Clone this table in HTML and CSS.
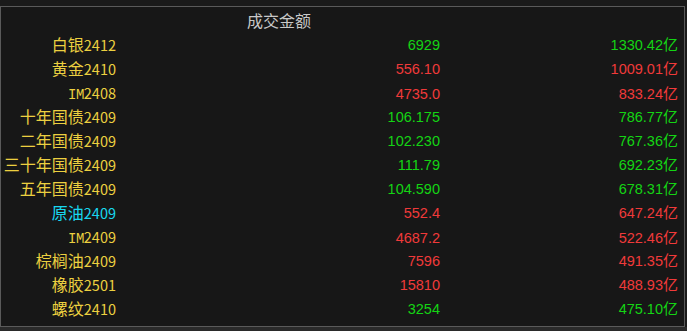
FILE: index.html
```html
<!DOCTYPE html>
<html>
<head>
<meta charset="utf-8">
<link rel="stylesheet" href="styles.css">
</head>
<body>
<div class="panel">
  <div class="table">
    <div class="row head">
      <div class="c1"></div>
      <div class="c2 htext">成交金额</div>
      <div class="c3"></div>
    </div>
    <div class="row"><div class="c1 name">白银<span class="d">2412</span></div><div class="c2 up">6929</div><div class="c3 up">1330.42<span class="yi">亿</span></div></div>
    <div class="row"><div class="c1 name">黄金<span class="d">2410</span></div><div class="c2 dn">556.10</div><div class="c3 dn">1009.01<span class="yi">亿</span></div></div>
    <div class="row"><div class="c1 name"><span class="m">IM</span><span class="d">2408</span></div><div class="c2 dn">4735.0</div><div class="c3 dn">833.24<span class="yi">亿</span></div></div>
    <div class="row"><div class="c1 name">十年国债<span class="d">2409</span></div><div class="c2 up">106.175</div><div class="c3 up">786.77<span class="yi">亿</span></div></div>
    <div class="row"><div class="c1 name">二年国债<span class="d">2409</span></div><div class="c2 up">102.230</div><div class="c3 up">767.36<span class="yi">亿</span></div></div>
    <div class="row"><div class="c1 name">三十年国债<span class="d">2409</span></div><div class="c2 up">111.79</div><div class="c3 up">692.23<span class="yi">亿</span></div></div>
    <div class="row"><div class="c1 name">五年国债<span class="d">2409</span></div><div class="c2 up">104.590</div><div class="c3 up">678.31<span class="yi">亿</span></div></div>
    <div class="row"><div class="c1 name cyan">原油<span class="d">2409</span></div><div class="c2 dn">552.4</div><div class="c3 dn">647.24<span class="yi">亿</span></div></div>
    <div class="row"><div class="c1 name"><span class="m">IM</span><span class="d">2409</span></div><div class="c2 dn">4687.2</div><div class="c3 dn">522.46<span class="yi">亿</span></div></div>
    <div class="row"><div class="c1 name">棕榈油<span class="d">2409</span></div><div class="c2 dn">7596</div><div class="c3 dn">491.35<span class="yi">亿</span></div></div>
    <div class="row"><div class="c1 name">橡胶<span class="d">2501</span></div><div class="c2 dn">15810</div><div class="c3 dn">488.93<span class="yi">亿</span></div></div>
    <div class="row"><div class="c1 name">螺纹<span class="d">2410</span></div><div class="c2 up">3254</div><div class="c3 up">475.10<span class="yi">亿</span></div></div>
  </div>
</div>
<div class="foot"></div>
</body>
</html>
```

FILE: styles.css
```css
html, body {
  margin: 0;
  padding: 0;
  background: #1a1a1a;
  width: 687px;
  height: 331px;
  overflow: hidden;
}
.panel {
  margin-top: 6px;
  width: 683px;
  height: 319px;
  border: 1px solid #5a5a5a;
  background: #171717;
  box-sizing: content-box;
}
.table {
  padding-top: 1px;
}
.row {
  display: grid;
  grid-template-columns: 115px 324px 238px;
  height: 24px;
  align-items: center;
  font-family: "Liberation Sans", Arial, sans-serif;
  font-size: 14.5px;
}
.c1, .c2, .c3 {
  text-align: right;
  white-space: nowrap;
  line-height: 24px;
}
.htext {
  text-align: left;
  padding-left: 131px;
  color: #c8c8c8;
  font-family: "Noto Sans CJK SC", sans-serif;
  font-size: 16px;
}
.name {
  color: #ecd040;
  font-family: "Noto Sans CJK SC", sans-serif;
  font-size: 16px;
}
.name .d {
  font-family: "Noto Sans CJK SC", sans-serif;
  font-size: 14.5px;
}
.name .m {
  font-family: "Liberation Mono", monospace;
  font-size: 14px;
  letter-spacing: -0.5px;
}
.cyan {
  color: #18d8f0;
}
.up {
  color: #14d414;
}
.dn {
  color: #f03a3a;
}
.yi {
  font-family: "Noto Sans CJK SC", sans-serif;
  font-size: 15px;
}
.foot {
  height: 4px;
  background: #2a2a2a;
}
```
